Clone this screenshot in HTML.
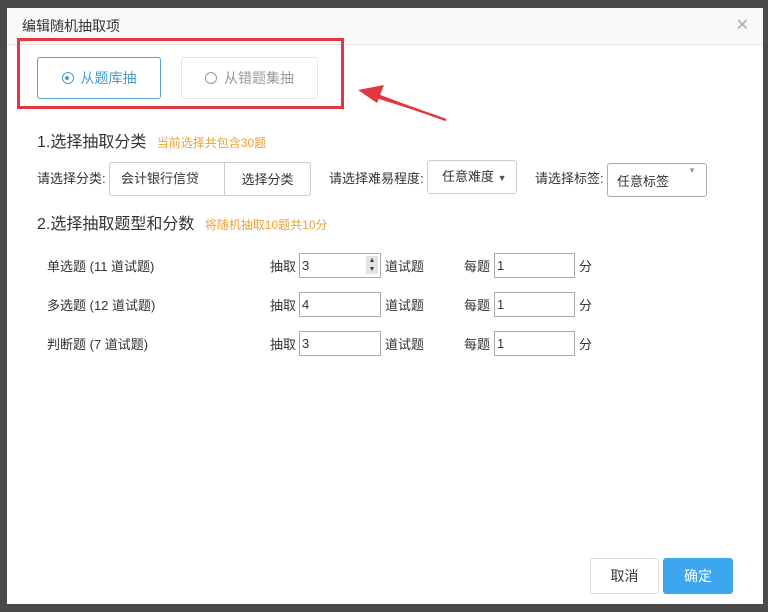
<!DOCTYPE html>
<html><head><meta charset="utf-8"><style>
*{box-sizing:border-box;margin:0;padding:0}
body{width:768px;height:612px;background:#4a4a4a;position:relative;overflow:hidden;font-family:"Liberation Sans","Noto Sans CJK SC",sans-serif;color:#333}
.dlg{position:absolute;left:7px;top:8px;width:756px;height:596px;background:#fff}
.hd{position:absolute;left:0;top:0;width:756px;height:37px;background:#f8f8f8;border-bottom:1px solid #e5e5e5;font-size:14px;line-height:36px;padding-left:15px}
.x{position:absolute;right:14px;top:0;font-size:16px;color:#aaa;line-height:36px}
.a{position:absolute;white-space:nowrap}
.btn{position:absolute;border:1px solid #ddd;border-radius:3px;text-align:center;font-size:14px}
.inp{position:absolute;border:1px solid #aaa;height:25px;font-size:13px;line-height:23px;padding-left:2px;background:#fff}
.f13{font-size:13px}
</style></head><body>
<div class="dlg">
<div class="hd">编辑随机抽取项<span class="x">✕</span></div>
<div class="btn" style="left:30px;top:49px;width:124px;height:42px;border-color:#5aa0c8;color:#4a9bd0;line-height:40px"><span style="display:inline-block;width:12px;height:12px;border:1.5px solid #4a9bd0;border-radius:50%;vertical-align:-1px;margin-right:7px;position:relative"><span style="position:absolute;left:2.5px;top:2.5px;width:4px;height:4px;background:#4a9bd0;border-radius:50%"></span></span>从题库抽</div>
<div class="btn" style="left:174px;top:49px;width:137px;height:42px;border-color:#e5e5e5;color:#999;line-height:40px"><span style="display:inline-block;width:12px;height:12px;border:1.5px solid #999;border-radius:50%;vertical-align:-1px;margin-right:7px"></span>从错题集抽</div>
<div class="a" style="left:30px;top:120px;font-size:16px">1.选择抽取分类 <span style="font-size:12px;color:#f0a030;margin-left:6px">当前选择共包含30题</span></div>
<div class="a f13" style="left:30px;top:160px">请选择分类:</div>
<div class="btn f13" style="left:102px;top:154px;width:202px;height:34px;border-color:#ccc;text-align:left;line-height:32px;padding-left:11px">会计银行信贷</div>
<div class="btn f13" style="left:217px;top:154px;width:87px;height:34px;border-color:#ccc;border-radius:0 3px 3px 0;line-height:34px">选择分类</div>
<div class="a f13" style="left:322px;top:160px">请选择难易程度:</div>
<div class="btn f13" style="left:420px;top:152px;width:90px;height:34px;border-color:#ccc;line-height:32px;text-align:left;padding-left:14px">任意难度 <span style="font-size:9px;color:#555">▼</span></div>
<div class="a f13" style="left:528px;top:160px">请选择标签:</div>
<div class="btn f13" style="left:600px;top:155px;width:100px;height:34px;border-color:#aaa;line-height:36px;text-align:left;padding-left:9px">任意标签<span style="position:absolute;right:10px;top:-11px;font-size:8px;color:#999">▼</span></div>
<div class="a" style="left:30px;top:202px;font-size:16px">2.选择抽取题型和分数 <span style="font-size:12px;color:#f0a030;margin-left:6px">将随机抽取10题共10分</span></div>

<div class="a f13" style="left:40px;top:248px">单选题 (11 道试题)</div>
<div class="a f13" style="left:263px;top:248px">抽取</div>
<div class="inp" style="left:292px;top:245px;width:82px">3<span style="position:absolute;right:2px;top:2px;width:12px;height:18px;background:#e3e3e3;font-size:7px;line-height:9px;text-align:center;color:#444">▲<br>▼</span></div>
<div class="a f13" style="left:378px;top:248px">道试题</div>
<div class="a f13" style="left:457px;top:248px">每题</div>
<div class="inp" style="left:487px;top:245px;width:81px">1</div>
<div class="a f13" style="left:572px;top:248px">分</div>

<div class="a f13" style="left:40px;top:287px">多选题 (12 道试题)</div>
<div class="a f13" style="left:263px;top:287px">抽取</div>
<div class="inp" style="left:292px;top:284px;width:82px">4</div>
<div class="a f13" style="left:378px;top:287px">道试题</div>
<div class="a f13" style="left:457px;top:287px">每题</div>
<div class="inp" style="left:487px;top:284px;width:81px">1</div>
<div class="a f13" style="left:572px;top:287px">分</div>

<div class="a f13" style="left:40px;top:326px">判断题 (7 道试题)</div>
<div class="a f13" style="left:263px;top:326px">抽取</div>
<div class="inp" style="left:292px;top:323px;width:82px">3</div>
<div class="a f13" style="left:378px;top:326px">道试题</div>
<div class="a f13" style="left:457px;top:326px">每题</div>
<div class="inp" style="left:487px;top:323px;width:81px">1</div>
<div class="a f13" style="left:572px;top:326px">分</div>

<div class="btn" style="left:583px;top:550px;width:69px;height:36px;line-height:34px;border-color:#ddd">取消</div>
<div class="btn" style="left:656px;top:550px;width:70px;height:36px;line-height:36px;border:none;background:#3ca7f0;color:#fff">确定</div>
</div>
<div style="position:absolute;left:17px;top:38px;width:327px;height:71px;border:3px solid #e0383e"></div>
<svg style="position:absolute;left:0;top:0" width="768" height="612"><polygon points="446,120 378,94 376,98" fill="#e0383e"/><line x1="446" y1="120" x2="375" y2="95" stroke="#e0383e" stroke-width="2.5"/><polygon points="358,90 384,85 377,103" fill="#e0383e"/></svg>
</body></html>
